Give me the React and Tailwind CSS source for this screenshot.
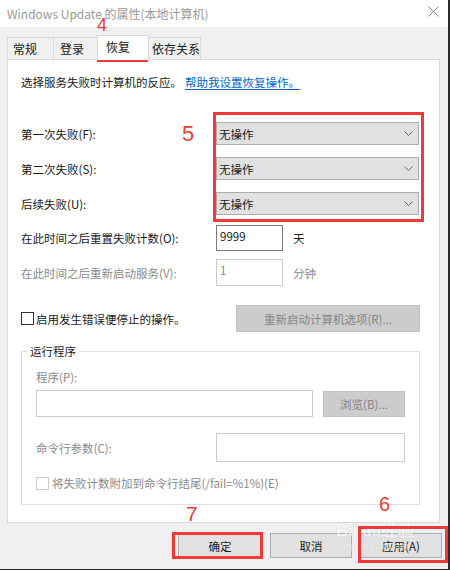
import React from "react";

const Chevron = () => (
  <svg width="9" height="5" viewBox="0 0 9 5" className="mr-[5px]">
    <path d="M0.5 0.5 L4.5 4.5 L8.5 0.5" fill="none" stroke="#606060" strokeWidth="1" />
  </svg>
);

function Dropdown() {
  return (
    <div className="flex h-[23px] w-[203px] items-center justify-between border border-[#adadad] bg-[#e1e1e1] pl-[2px]">
      <span>无操作</span>
      <Chevron />
    </div>
  );
}

export default function App() {
  return (
    <div className="relative h-[570px] w-[450px] overflow-hidden border-b border-r-2 border-[#2a2a2a] bg-[#f0f0f0] text-[11.5px] leading-[16px] text-[#1a1a1a] font-['Noto_Sans_CJK_SC','Noto_Sans',sans-serif]">
      {/* title bar */}
      <div className="flex h-[27px] items-center justify-between bg-white pl-[7px] pr-[9px]">
        <span className="text-[12px] text-[#9a9a9a]">Windows Update 的属性(本地计算机)</span>
        <svg width="11" height="11" viewBox="0 0 11 11" className="-mt-[4px]">
          <path d="M0.5 0.5 L10.5 10.5 M10.5 0.5 L0.5 10.5" stroke="#8a8a8a" strokeWidth="1" />
        </svg>
      </div>

      {/* tabs */}
      <div className="mt-[8px] flex items-end pl-[7px] text-[12px]">
        <div className="flex h-[22px] w-[47px] items-center border border-b-0 border-[#d9d9d9] pl-[5px]">常规</div>
        <div className="-ml-px flex h-[22px] w-[45px] items-center border border-b-0 border-[#d9d9d9] pl-[6px]">登录</div>
        <div className="relative z-10 -mb-px -ml-px flex h-[25px] w-[52px] items-start border border-b-0 border-[#d9d9d9] bg-white pl-[8px] pt-[3px]">恢复</div>
        <div className="-ml-px flex h-[22px] w-[53px] items-center border border-b-0 border-[#d9d9d9] pl-[3px]">依存关系</div>
      </div>

      {/* panel */}
      <div className="mx-[7px] flex h-[464px] w-[433px] flex-col border border-[#d9d9d9] bg-white pl-[13px]">
        <div className="mt-[14px] flex h-[16px] items-center">
          <span>选择服务失败时计算机的反应。</span>
          <span className="ml-[3px] text-[#0066cc] underline underline-offset-2">帮助我设置恢复操作。</span>
        </div>

        <div className="mt-[32px] flex h-[23px] items-center">
          <span className="w-[195px]">第一次失败(F):</span>
          <Dropdown />
        </div>
        <div className="mt-[12px] flex h-[23px] items-center">
          <span className="w-[195px]">第二次失败(S):</span>
          <Dropdown />
        </div>
        <div className="mt-[12px] flex h-[23px] items-center">
          <span className="w-[195px]">后续失败(U):</span>
          <Dropdown />
        </div>

        <div className="mt-[10px] flex h-[26px] items-center">
          <span className="w-[195px]">在此时间之后重置失败计数(O):</span>
          <div className="h-[26px] w-[67px] border border-[#7a7a7a] pl-[3px] pt-[2px]">9999</div>
          <span className="ml-[10px]">天</span>
        </div>
        <div className="mt-[8px] flex h-[27px] items-center text-[#8a8a8a]">
          <span className="w-[195px]">在此时间之后重新启动服务(V):</span>
          <div className="h-[27px] w-[67px] border border-[#cccccc] pl-[3px] pt-[2px]">1</div>
          <span className="ml-[10px]">分钟</span>
        </div>

        <div className="mt-[19px] flex h-[27px] items-center">
          <div className="flex w-[215px] items-center">
            <div className="h-[13px] w-[13px] border border-[#333]" />
            <span className="ml-[2px]">启用发生错误便停止的操作。</span>
          </div>
          <div className="flex h-[27px] w-[184px] items-center justify-center border border-[#c4c4c4] bg-[#cccccc] text-[#858585]">
            重新启动计算机选项(R)...
          </div>
        </div>

        {/* group box */}
        <div className="relative mt-[19px] h-[154px] w-[399px] border border-[#dcdcdc] pl-[14px] text-[#8a8a8a]">
          <span className="absolute -top-[9px] left-[5px] bg-white px-[3px] text-[#1a1a1a]">运行程序</span>
          <div className="mt-[17px] h-[16px]">程序(P):</div>
          <div className="mt-[5px] flex items-center">
            <div className="h-[27px] w-[277px] border border-[#cccccc]" />
            <div className="ml-[10px] flex h-[26px] w-[82px] items-center justify-center border border-[#c4c4c4] bg-[#cccccc] text-[#858585]">
              浏览(B)...
            </div>
          </div>
          <div className="mt-[16px] flex items-center">
            <span className="w-[180px]">命令行参数(C):</span>
            <div className="h-[29px] w-[189px] border border-[#cccccc]" />
          </div>
          <div className="mt-[13px] flex items-center">
            <div className="h-[13px] w-[13px] border border-[#cccccc]" />
            <span className="ml-[3px]">将失败计数附加到命令行结尾(/fail=%1%)(E)</span>
          </div>
        </div>
      </div>

      {/* bottom buttons */}
      <div className="mt-[10px] flex justify-end gap-2 pr-[6px]">
        <div className="flex h-[25px] w-[84px] items-center justify-center border border-[#adadad] bg-[#e1e1e1]">确定</div>
        <div className="flex h-[25px] w-[82px] items-center justify-center border border-[#adadad] bg-[#e1e1e1]">取消</div>
        <div className="flex h-[25px] w-[82px] items-center justify-center border border-[#adadad] bg-[#e1e1e1]">应用(A)</div>
      </div>

      {/* watermark */}
      <div className="pointer-events-none absolute left-[336px] top-[522px] flex flex-col items-center leading-none text-white opacity-60 [text-shadow:0_0_1px_#aaa]">
        <span className="text-[17px] font-['Liberation_Sans',sans-serif] font-bold">Bai<span className="text-[15px]">du</span>经验</span>
        <span className="mt-[3px] text-[8px]">jingyan.baidu.com</span>
      </div>

      {/* annotations */}
      <div className="pointer-events-none absolute left-[97px] top-[36px] h-[26px] w-[51px] border-2 border-[#f03a3a]" />
      <span className="absolute left-[97px] top-[15px] text-[18px] leading-[20px] text-[#f03a3a] font-['Liberation_Sans',sans-serif]">4</span>
      <div className="pointer-events-none absolute left-[213px] top-[112px] h-[110px] w-[211px] border-[3px] border-[#f03a3a]" />
      <span className="absolute left-[182px] top-[121px] text-[22px] leading-[26px] text-[#f03a3a] font-['Liberation_Sans',sans-serif]">5</span>
      <div className="pointer-events-none absolute left-[172px] top-[532px] h-[27px] w-[91px] border-[3px] border-[#f03a3a]" />
      <span className="absolute left-[186px] top-[502px] text-[21px] leading-[24px] text-[#f03a3a] font-['Liberation_Sans',sans-serif]">7</span>
      <div className="pointer-events-none absolute left-[358px] top-[526px] h-[37px] w-[90px] border-[3px] border-[#f03a3a]" />
      <span className="absolute left-[379px] top-[493px] text-[20px] leading-[22px] text-[#f03a3a] font-['Liberation_Sans',sans-serif]">6</span>
    </div>
  );
}
